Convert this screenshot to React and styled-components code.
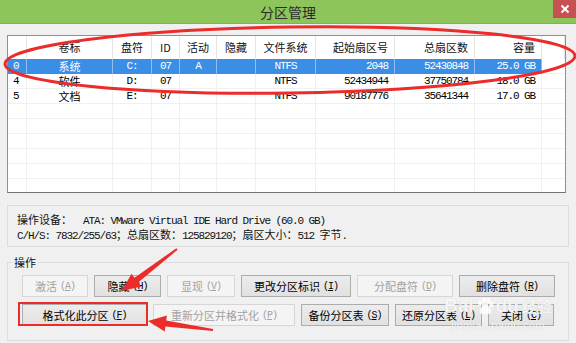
import React from "react";
import styled, { createGlobalStyle } from "styled-components";

const CJK = `"Noto Sans CJK SC", "Noto Sans", sans-serif`;
const MONO = `"Liberation Mono", "Noto Sans CJK SC", monospace`;

const Global = createGlobalStyle`
  html, body { margin: 0; padding: 0; background: #f0f0f0; }
  body { font-family: ${CJK}; }
`;

const Window = styled.div`
  position: relative;
  width: 576px;
  height: 343px;
  overflow: hidden;
  background: #f0f0f0;
  font-family: ${CJK};
  font-size: 11px;
  color: #000;
`;

const TitleBar = styled.div`
  height: 24px;
  box-sizing: border-box;
  background: #8dc55b;
  border-bottom: 1px solid #7fb44f;
  display: grid;
  grid-template-columns: 1fr auto 1fr;
  align-items: start;
`;

const Title = styled.div`
  grid-column: 2;
  font-size: 14px;
  line-height: 24px;
  color: #2b2b2b;
`;

const Close = styled.div`
  grid-column: 3;
  justify-self: end;
  width: 23px;
  height: 18px;
  background: #c75050;
  display: flex;
  align-items: center;
  justify-content: center;
`;

const Body = styled.div`
  padding: 11px 7px 0 7px;
`;

const ListView = styled.div`
  height: 158px;
  margin-right: 3px;
  box-sizing: border-box;
  border: 1px solid #8a8f98;
  border-bottom-color: #6f737a;
  background: #fff;
  overflow: hidden;
`;

const COLS = "19px 86px 39px 28px 37px 39px 60px 79px 80px 67px 1fr";

const HeadRow = styled.div`
  display: grid;
  grid-template-columns: ${COLS};
  height: 23px;
`;

const HeadCell = styled.div`
  box-sizing: border-box;
  border-right: 1px solid #e5e5e5;
  line-height: 23px;
  text-align: ${(p) => p.$align || "center"};
  padding: 0 ${(p) => (p.$align === "right" ? "6px" : "0")};
  white-space: nowrap;
  color: #111;
`;

const Row = styled.div`
  display: grid;
  grid-template-columns: ${COLS};
  height: 15px;
`;

const Cell = styled.div`
  box-sizing: border-box;
  border-right: 1px solid ${(p) => (p.$sel ? "#8fc0f2" : "#f0f0f0")};
  border-bottom: 1px solid ${(p) => (p.$sel ? "#3a8ee6" : "#f0f0f0")};
  background: ${(p) => (p.$sel ? "#3a8ee6" : "transparent")};
  color: ${(p) => (p.$sel ? "#fff" : "#000")};
  line-height: 14px;
  white-space: nowrap;
  overflow: hidden;
  text-align: ${(p) => p.$align || "center"};
  padding: 0 ${(p) => (p.$align === "right" ? "6px" : p.$align === "left" ? "5px" : "0")};
  font-family: ${(p) => (p.$mono ? MONO : CJK)};
  letter-spacing: ${(p) => (p.$mono ? "-1.1px" : "0")};
`;

const Filler = styled.div`
  border-bottom: 1px solid #f0f0f0;
`;

const InfoBox = styled.div`
  margin-top: 12px;
  height: 42px;
  box-sizing: border-box;
  border: 1px solid #dcdcdc;
  padding: 7px 9px;
`;

const InfoLine = styled.div`
  line-height: 13px;
  white-space: pre;
  color: #111;
`;

const M = styled.span`
  font-family: ${MONO};
  letter-spacing: -1.1px;
`;

const Group = styled.fieldset`
  margin: 9px 0 0 0;
  padding: 6px 0 14px 0;
  border: 1px solid #dcdcdc;
  min-width: 0;
`;

const Legend = styled.legend`
  margin-left: 4px;
  padding: 0 2px;
  line-height: 13px;
  font-size: 11px;
  color: #111;
`;

const Buttons = styled.div`
  display: flex;
  flex-direction: column;
  gap: 7px;
  padding-left: 14px;
`;

const ButtonRow = styled.div`
  display: flex;
  gap: 6px;
`;

const Btn = styled.div`
  width: ${(p) => p.$w}px;
  height: 22px;
  box-sizing: border-box;
  display: flex;
  align-items: center;
  justify-content: center;
  gap: 3px;
  border: 1px solid ${(p) => (p.$disabled ? "#d6d6d6" : "#acacac")};
  background: ${(p) => (p.$disabled ? "#f4f4f4" : "linear-gradient(#ececec, #e1e1e1)")};
  color: ${(p) => (p.$disabled ? "#a2a2a2" : "#000")};
  font-size: 11px;
  white-space: nowrap;
`;

const Acc = styled.span`
  font-family: ${MONO};
  font-size: 10px;
  letter-spacing: -1px;
  u { text-decoration: underline; }
`;

const Overlay = styled.svg`
  position: absolute;
  left: 0;
  top: 0;
  pointer-events: none;
`;

const Watermark = styled.div`
  position: absolute;
  left: 444px;
  top: 295px;
  pointer-events: none;
  color: rgba(255, 255, 255, 0.85);
  text-shadow: 0 0 1px rgba(120, 120, 120, 0.35);
  display: flex;
  flex-direction: column;
  align-items: center;
`;

const WmTop = styled.div`
  display: flex;
  align-items: center;
  font-family: "Liberation Sans", sans-serif;
  font-weight: bold;
  font-size: 19px;
  line-height: 22px;
  gap: 1px;
`;

const WmCn = styled.span`
  font-family: ${CJK};
  font-size: 15px;
  font-weight: bold;
  margin-left: 2px;
`;

const WmUrl = styled.div`
  font-family: "Liberation Sans", sans-serif;
  font-size: 11px;
  line-height: 13px;
  margin-top: 2px;
  letter-spacing: 0.3px;
`;

const rows = [
  { idx: "0", label: "系统", drive: "C:", id: "07", act: "A", fs: "NTFS", start: "2048", total: "52430848", size: "25.0 GB", sel: true },
  { idx: "4", label: "软件", drive: "D:", id: "07", act: "", fs: "NTFS", start: "52434944", total: "37750784", size: "18.0 GB" },
  { idx: "5", label: "文档", drive: "E:", id: "07", act: "", fs: "NTFS", start: "90187776", total: "35641344", size: "17.0 GB" },
];
const emptyRows = Array.from({ length: 7 });

const row1 = [
  { t: "激活", k: "A", w: 66, d: true },
  { t: "隐藏", k: "H", w: 67 },
  { t: "显现", k: "V", w: 68, d: true },
  { t: "更改分区标识", k: "I", w: 110 },
  { t: "分配盘符", k: "D", w: 96, d: true },
  { t: "删除盘符", k: "R", w: 96 },
];
const row2 = [
  { t: "格式化此分区", k: "F", w: 125 },
  { t: "重新分区并格式化", k: "P", w: 142, d: true },
  { t: "备份分区表", k: "S", w: 88 },
  { t: "还原分区表", k: "L", w: 87 },
  { t: "关闭", k: "C", w: 66 },
];

function Button({ b }) {
  return (
    <Btn $w={b.w} $disabled={b.d}>
      <span>{b.t}</span>
      <Acc>
        (<u>{b.k}</u>)
      </Acc>
    </Btn>
  );
}

export default function App() {
  return (
    <Window>
      <Global />
      <TitleBar>
        <Title>分区管理</Title>
        <Close>
          <svg width="10" height="10" viewBox="0 0 10 10">
            <path d="M1.5 1.5 L8.5 8.5 M8.5 1.5 L1.5 8.5" stroke="#fff" strokeWidth="2" />
          </svg>
        </Close>
      </TitleBar>
      <Body>
        <ListView>
          <HeadRow>
            <HeadCell />
            <HeadCell>卷标</HeadCell>
            <HeadCell>盘符</HeadCell>
            <HeadCell>ID</HeadCell>
            <HeadCell>活动</HeadCell>
            <HeadCell>隐藏</HeadCell>
            <HeadCell>文件系统</HeadCell>
            <HeadCell $align="right">起始扇区号</HeadCell>
            <HeadCell $align="right">总扇区数</HeadCell>
            <HeadCell $align="right">容量</HeadCell>
            <HeadCell />
          </HeadRow>
          {rows.map((r) => (
            <Row key={r.idx}>
              <Cell $sel={r.sel} $align="left" $mono>{r.idx}</Cell>
              <Cell $sel={r.sel}>{r.label}</Cell>
              <Cell $sel={r.sel} $mono>{r.drive}</Cell>
              <Cell $sel={r.sel} $mono>{r.id}</Cell>
              <Cell $sel={r.sel} $mono>{r.act}</Cell>
              <Cell $sel={r.sel} />
              <Cell $sel={r.sel} $mono>{r.fs}</Cell>
              <Cell $sel={r.sel} $align="right" $mono>{r.start}</Cell>
              <Cell $sel={r.sel} $align="right" $mono>{r.total}</Cell>
              <Cell $sel={r.sel} $align="right" $mono>{r.size}</Cell>
              <Filler />
            </Row>
          ))}
          {emptyRows.map((_, i) => (
            <Row key={"e" + i}>
              {Array.from({ length: 10 }).map((__, j) => (
                <Cell key={j} />
              ))}
              <Filler />
            </Row>
          ))}
        </ListView>

        <InfoBox>
          <InfoLine>
            操作设备：<M>  ATA: VMware Virtual IDE Hard Drive (60.0 GB)</M>
          </InfoLine>
          <InfoLine>
            <M>C/H/S: 7832/255/63</M>；总扇区数：<M>125829120</M>；扇区大小：<M>512 </M>字节<M>.</M>
          </InfoLine>
        </InfoBox>

        <Group>
          <Legend>操作</Legend>
          <Buttons>
            <ButtonRow>
              {row1.map((b) => (
                <Button key={b.k} b={b} />
              ))}
            </ButtonRow>
            <ButtonRow>
              {row2.map((b) => (
                <Button key={b.k} b={b} />
              ))}
            </ButtonRow>
          </Buttons>
        </Group>
      </Body>

      <Watermark>
        <WmTop>
          <span>Bai</span>
          <svg width="20" height="20" viewBox="0 0 20 20">
            <g fill="rgba(255,255,255,0.85)">
              <ellipse cx="5" cy="7" rx="2" ry="2.6" />
              <ellipse cx="9" cy="4" rx="2" ry="2.6" />
              <ellipse cx="13.5" cy="4.5" rx="2" ry="2.6" />
              <ellipse cx="16.5" cy="8.5" rx="1.8" ry="2.4" />
              <path d="M10.5 9 C7 9 4 14 5 16.5 C6 19 9 17.5 10.5 17.5 C12 17.5 15 19 16 16.5 C17 14 14 9 10.5 9 Z" />
            </g>
          </svg>
          <span>du</span>
          <WmCn>经验</WmCn>
        </WmTop>
        <WmUrl>jingyan.baidu.com</WmUrl>
      </Watermark>

      <Overlay width="576" height="343" viewBox="0 0 576 343">
        <ellipse
          cx="290"
          cy="60"
          rx="285"
          ry="33"
          transform="rotate(-0.8 290 60)"
          fill="none"
          stroke="#ec2b2b"
          strokeWidth="3"
        />
        <polygon
          points="176.4,248.2 134.5,277.7 131.4,273.7 122,291 141.2,286.5 138.1,282.5 177.6,249.8"
          fill="#ec2b2b"
        />
        <polygon
          points="213.1,329 166.2,320.5 166.9,315.6 148,321 164.7,331.4 165.4,326.5 212.9,331"
          fill="#ec2b2b"
        />
        <rect x="19" y="303" width="128" height="22" fill="none" stroke="#ec2b2b" strokeWidth="2" />
      </Overlay>
    </Window>
  );
}
